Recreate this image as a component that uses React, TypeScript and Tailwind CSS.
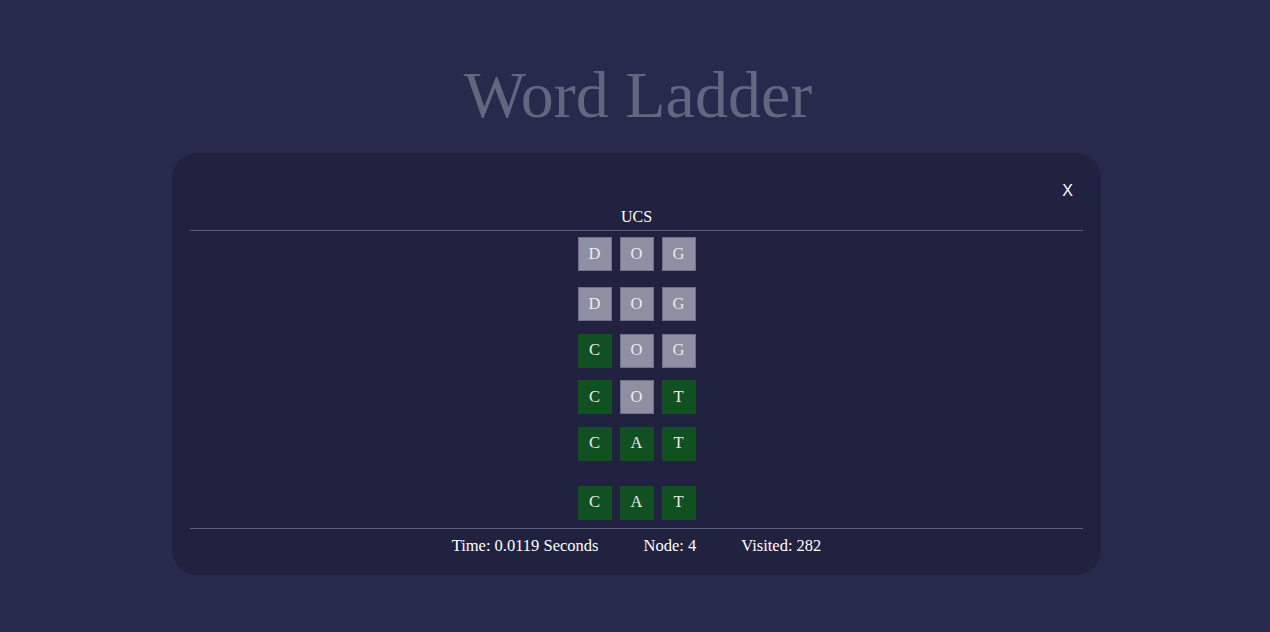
import React from 'react';

type Tile = { ch: string; hit: boolean };

const toTiles = (word: string, target: string): Tile[] =>
  word.split('').map((ch, i) => ({ ch, hit: ch === target[i] }));

const start = 'DOG';
const end = 'CAT';
const path = ['DOG', 'COG', 'COT', 'CAT'];

function WordRow({ word }: { word: string }) {
  return (
    <div className="flex justify-center gap-2">
      {toTiles(word, end).map((t, i) => (
        <div
          key={i}
          className={
            t.hit
              ? 'w-[34px] h-[34px] flex items-center justify-center bg-[#115021] text-[#ececec] text-[16.5px] border border-[#115021]'
              : 'w-[34px] h-[34px] flex items-center justify-center bg-[#8e8fa3] text-[#ececec] text-[16.5px] border border-[#6f7088]'
          }
        >
          {t.ch}
        </div>
      ))}
    </div>
  );
}

export default function App() {
  return (
    <div
      className="h-[632px] bg-[#272a4c] overflow-hidden"
      style={{ fontFamily: '"Liberation Serif", "Times New Roman", serif' }}
    >
      <h1 className="pt-[62px] pl-[6px] text-center text-[66px] leading-none text-[#62667f]">
        Word Ladder
      </h1>

      <div className="mt-[25px] flex justify-center pl-[3px]">
        <div className="w-[929px] rounded-[25px] bg-[#20223f] px-[18px] pt-[26px] pb-[17px] text-[16px] text-white">
          <div className="flex justify-end h-6 leading-6 pr-[10px]">
            <button
              className="leading-6 text-white"
              style={{ fontFamily: '"Liberation Sans", Arial, sans-serif' }}
            >
              X
            </button>
          </div>
          <div className="mt-[2px] text-center leading-6">UCS</div>
          <div className="mt-px h-px bg-[#5a5c78]" />

          <div className="mt-[6px]">
            <WordRow word={start} />
          </div>
          <div className="mt-[16px] flex flex-col gap-[12.5px]">
            {path.map((w, i) => (
              <WordRow key={i} word={w} />
            ))}
          </div>
          <div className="mt-[25px]">
            <WordRow word={end} />
          </div>

          <div className="mt-2 h-px bg-[#5a5c78]" />
          <div className="mt-[5px] flex justify-center gap-[45px] text-[16.5px] leading-6">
            <span>Time: 0.0119 Seconds</span>
            <span>Node: 4</span>
            <span>Visited: 282</span>
          </div>
        </div>
      </div>
    </div>
  );
}
